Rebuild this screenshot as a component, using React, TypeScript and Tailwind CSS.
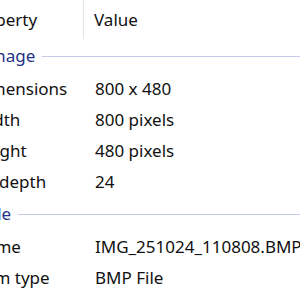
const groups = [
  {
    name: 'Image',
    rows: [
      ['Dimensions', '800 x 480'],
      ['Width', '800 pixels'],
      ['Height', '480 pixels'],
      ['Bit depth', '24'],
    ],
  },
  {
    name: 'File',
    rows: [
      ['Name', 'IMG_251024_110808.BMP'],
      ['Item type', 'BMP File'],
    ],
  },
];

export default function App() {
  return (
    <div
      className="w-[300px] h-[300px] overflow-hidden bg-white text-[17px] text-[#111111]"
      style={{ fontFamily: '"Noto Sans", "Open Sans", sans-serif' }}
    >
      <div className="-ml-[27px] w-[420px]">
        {/* column header */}
        <div className="flex h-[39px]">
          <div className="w-[111px] flex items-center border-r border-[#e5e5e5]">
            <span className="-ml-[5px]">Property</span>
          </div>
          <div className="flex items-center pl-[10px]">Value</div>
        </div>

        {groups.map((g) => (
          <div key={g.name}>
            <div className="flex items-center h-[34px] pl-[11px]">
              <span className="text-[#1e3287]">{g.name}</span>
              <div className="flex-1 h-px bg-[#c5cce8] ml-[7px] mt-[1px]" />
            </div>
            {g.rows.map(([label, value]) => (
              <div key={label} className="flex items-center h-[31px]">
                <div className="w-[122px] whitespace-nowrap">{label}</div>
                <div className="whitespace-nowrap">{value}</div>
              </div>
            ))}
          </div>
        ))}
      </div>
    </div>
  );
}
